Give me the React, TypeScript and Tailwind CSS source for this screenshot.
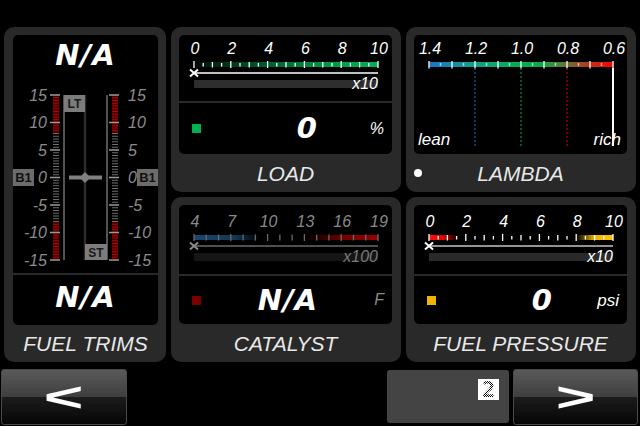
import React from 'react';

const FONT = "'Liberation Sans', Arial, sans-serif";
const X0 = 15;
const W = 184;

type Stop = [number, string, number];

type ScaleProps = {
  id: string;
  labels: string[];
  ticks: number;
  majorEvery: number;
  stops: Stop[];
  unit: string;
  dy?: number;
  dim?: boolean;
  lineColor?: string;
  track?: string;
};

function HScale({ id, labels, ticks, majorEvery, stops, unit, dy = 0, dim = false, lineColor, track }: ScaleProps) {
  const text = dim ? '#8a8a8a' : '#ffffff';
  const tick = dim ? '#6a6a6a' : '#ffffff';
  const line = lineColor ?? (dim ? '#6a6a6a' : '#ffffff');
  const mark = dim ? '#8a8a8a' : '#ffffff';
  const y = (v: number) => v + dy;

  const tickEls = [];
  for (let i = 0; i <= ticks; i++) {
    const x = X0 + (W * i) / ticks;
    let y1 = 28;
    let y2 = 31.5;
    if (i % majorEvery === 0) {
      y1 = 26;
      y2 = 33;
    } else if (majorEvery === 4 && i % 2 === 0) {
      y1 = 27;
      y2 = 32.5;
    } else if (majorEvery === 3) {
      y1 = 26.5;
      y2 = 32.5;
    }
    tickEls.push(
      <line key={i} x1={x} x2={x} y1={y(y1)} y2={y(y2)} stroke={tick} strokeWidth={1.3} />
    );
  }

  return (
    <svg width={213} height={66 + dy} className="block">
      <defs>
        <linearGradient id={id} x1="0" x2="1" y1="0" y2="0">
          {stops.map(([o, c, a], i) => (
            <stop key={i} offset={o} stopColor={c} stopOpacity={a} />
          ))}
        </linearGradient>
      </defs>
      {labels.map((l, i) => (
        <text
          key={l}
          x={X0 + 1 + (W * i) / (labels.length - 1)}
          y={y(18.5)}
          textAnchor="middle"
          fontFamily={FONT}
          fontStyle="italic"
          fontSize={16}
          fill={text}
        >
          {l}
        </text>
      ))}
      <rect x={X0} y={y(27)} width={W} height={5} fill={`url(#${id})`} />
      {tickEls}
      <line x1={X0} x2={X0 + W} y1={y(38)} y2={y(38)} stroke={line} strokeWidth={1.5} />
      <path
        d={`M${X0 - 4} ${y(34.5)} L${X0 + 4} ${y(41.5)} M${X0 + 4} ${y(34.5)} L${X0 - 4} ${y(41.5)}`}
        stroke={mark}
        strokeWidth={2}
      />
      <rect x={X0} y={y(45)} width={W} height={8} fill={track ?? (dim ? '#151515' : '#2e2e2e')} />
      <text
        x={X0 + W}
        y={y(53.5)}
        textAnchor="end"
        fontFamily={FONT}
        fontStyle="italic"
        fontSize={16}
        fill={dim ? '#7a7a7a' : '#ffffff'}
      >
        {unit}
      </text>
    </svg>
  );
}

function Readout({
  swatch,
  value,
  unit,
  unitClass,
  h,
}: {
  swatch: string;
  value: string;
  unit: string;
  unitClass: string;
  h: string;
}) {
  return (
    <div className={`flex items-center ${h}`}>
      <div className={`ml-[13px] h-[9px] w-[9px] ${swatch}`} />
      <div className="flex-1 text-right font-['DejaVu_Sans',sans-serif] text-[29px] font-bold italic leading-none tracking-[1px] text-white">
        {value}
      </div>
      <div className={`w-[74px] pr-[8px] text-right italic leading-none ${unitClass}`}>{unit}</div>
    </div>
  );
}

function Panel({
  title,
  children,
  className = '',
  lead,
}: {
  title: string;
  children: React.ReactNode;
  className?: string;
  lead?: React.ReactNode;
}) {
  return (
    <div className={`flex flex-col rounded-[10px] bg-[#292929] pt-[8px] pl-[8px] pr-[9px] ${className}`}>
      <div className="overflow-hidden rounded-[5px] bg-black">{children}</div>
      <div className="grid flex-1 grid-cols-[1fr_auto_1fr] items-center">
        <div className="flex items-center">{lead}</div>
        <div className="text-[21px] italic leading-none text-[#e8e8e8]">{title}</div>
        <div />
      </div>
    </div>
  );
}

function TrimGauge() {
  const yv = (v: number) => 20 + (15 - v) * 5.5;
  const nums = [15, 10, 5, 0, -5, -10, -15];
  const marks = [];
  for (let k = -30; k <= 30; k++) {
    const v = k / 2;
    for (const x of [40, 99]) {
      if (v % 5 === 0) {
        marks.push(<rect key={`${x}-${k}`} x={x - 3} y={yv(v) - 0.75} width={10} height={1.5} fill="#9a9a9a" />);
      } else {
        marks.push(
          <rect
            key={`${x}-${k}`}
            x={x}
            y={yv(v) - 0.5}
            width={6}
            height={1}
            fill={Math.abs(v) > 8 ? '#b80000' : '#6e6e6e'}
          />
        );
      }
    }
  }
  return (
    <svg width={145} height={198} className="block">
      {[40, 99].map((x) => (
        <g key={x}>
          <rect x={x} y={yv(15)} width={6} height={yv(8) - yv(15)} fill="#480000" />
          <rect x={x} y={yv(-8)} width={6} height={yv(-15) - yv(-8)} fill="#480000" />
        </g>
      ))}
      {marks}
      {nums.map((n) => (
        <g key={n}>
          <text x={34} y={yv(n) + 5.5} textAnchor="end" fontFamily={FONT} fontStyle="italic" fontSize={16} fill="#8c8c8c">
            {n}
          </text>
          <text x={115} y={yv(n) + 5.5} fontFamily={FONT} fontStyle="italic" fontSize={16} fill="#8c8c8c">
            {n}
          </text>
        </g>
      ))}
      <line x1={51} x2={51} y1={yv(15)} y2={yv(-15)} stroke="#8a8a8a" strokeWidth={1.2} />
      <line x1={94} x2={94} y1={yv(15)} y2={yv(-15)} stroke="#8a8a8a" strokeWidth={1.2} />
      <line x1={72} x2={72} y1={yv(15)} y2={yv(-15)} stroke="#2c2c2c" strokeWidth={2.5} />
      <rect x={51} y={20} width={21} height={17} fill="#7c7c7c" />
      <text x={61.5} y={33} textAnchor="middle" fontFamily={FONT} fontWeight="bold" fontSize={12} fill="#1a1a1a">
        LT
      </text>
      <rect x={72} y={169} width={22} height={16} fill="#7c7c7c" />
      <text x={83} y={181.5} textAnchor="middle" fontFamily={FONT} fontWeight="bold" fontSize={12} fill="#1a1a1a">
        ST
      </text>
      <rect x={56} y={yv(0) - 2} width={33} height={4} fill="#808080" />
      <path d={`M72 ${yv(0) - 5.5} L77.5 ${yv(0)} L72 ${yv(0) + 5.5} L66.5 ${yv(0)} Z`} fill="#808080" />
      <rect x={0} y={94} width={21} height={17} fill="#6c6c6c" />
      <text x={10.5} y={107} textAnchor="middle" fontFamily={FONT} fontWeight="bold" fontSize={13} fill="#111">
        B1
      </text>
      <rect x={124} y={94} width={21} height={17} fill="#6c6c6c" />
      <text x={134.5} y={107} textAnchor="middle" fontFamily={FONT} fontWeight="bold" fontSize={13} fill="#111">
        B1
      </text>
    </svg>
  );
}

function LambdaChart() {
  const step = W / 4;
  const labels = ['1.4', '1.2', '1.0', '0.8', '0.6'];
  const tickEls = [];
  for (let i = 0; i <= 16; i++) {
    const x = X0 + (W * i) / 16;
    if (i % 2 === 0) {
      tickEls.push(<line key={i} x1={x} x2={x} y1={26} y2={33.5} stroke="#ffffff" strokeWidth={1.3} />);
    } else {
      tickEls.push(<line key={i} x1={x} x2={x} y1={28} y2={31} stroke="#ffffff" strokeOpacity={0.6} strokeWidth={1.5} />);
    }
  }
  const dotted: [number, string][] = [
    [1, '#1a6fc0'],
    [2, '#00b050'],
    [3, '#e00000'],
  ];
  return (
    <svg width={213} height={119} className="block">
      <defs>
        <linearGradient id="g-lambda" x1="0" x2="1" y1="0" y2="0">
          <stop offset={0} stopColor="#1a74c8" />
          <stop offset={0.25} stopColor="#10a088" />
          <stop offset={0.5} stopColor="#00b050" />
          <stop offset={0.62} stopColor="#10a848" />
          <stop offset={0.75} stopColor="#6a7030" />
          <stop offset={0.88} stopColor="#c03018" />
          <stop offset={1} stopColor="#ff0000" />
        </linearGradient>
      </defs>
      {labels.map((l, i) => (
        <text
          key={l}
          x={X0 + 1 + step * i}
          y={18.5}
          textAnchor="middle"
          fontFamily={FONT}
          fontStyle="italic"
          fontSize={16}
          fill="#ffffff"
        >
          {l}
        </text>
      ))}
      <rect x={X0} y={27} width={W} height={5} fill="url(#g-lambda)" />
      {tickEls}
      {dotted.map(([i, c]) => (
        <line key={i} x1={X0 + step * i} x2={X0 + step * i} y1={33} y2={111} stroke={c} strokeWidth={1} strokeDasharray="2 2" />
      ))}
      <text x={4} y={110} fontFamily={FONT} fontStyle="italic" fontSize={17} fill="#ffffff">
        lean
      </text>
      <text x={207} y={110} textAnchor="end" fontFamily={FONT} fontStyle="italic" fontSize={17} fill="#ffffff">
        rich
      </text>
      <line x1={X0 + W} x2={X0 + W} y1={33} y2={111} stroke="#ffffff" strokeWidth={2} />
    </svg>
  );
}

function NavButton({ label, className }: { label: string; className: string }) {
  return (
    <div
      className={`flex h-[56px] items-center justify-center rounded-[3px] border border-[#4a4a4a] bg-[linear-gradient(to_bottom,#5a5a5a_0%,#3e3e3e_50%,#1c1c1c_50%,#060606_100%)] ${className}`}
    >
      <span className="inline-block scale-x-[1.7] text-[40px] font-bold leading-none text-white">{label}</span>
    </div>
  );
}

export default function App() {
  return (
    <div className="flex h-[426px] w-[640px] flex-col overflow-hidden bg-black font-['Liberation_Sans',Arial,sans-serif]">
      <div className="mt-[27px] ml-[4px] grid grid-cols-[162px_230px_230px] grid-rows-[165px_165px] gap-[5px]">
        <div className="row-span-2 flex flex-col rounded-[10px] bg-[#292929] pt-[8px] pl-[9px] pr-[8px]">
          <div className="flex h-[290px] flex-col overflow-hidden rounded-[5px] bg-black">
            <div className="flex h-[40px] items-center justify-center font-['DejaVu_Sans',sans-serif] text-[29px] font-bold italic leading-none tracking-[1px] text-white">
              N/A
            </div>
            <TrimGauge />
            <div className="h-[2px] bg-[#2a2a2a]" />
            <div className="flex h-[50px] items-center justify-center pb-[6px] font-['DejaVu_Sans',sans-serif] text-[29px] font-bold italic leading-none tracking-[1px] text-white">
              N/A
            </div>
          </div>
          <div className="flex flex-1 items-center justify-center text-[21px] italic leading-none text-[#e8e8e8]">
            FUEL TRIMS
          </div>
        </div>

        <Panel title="LOAD">
          <HScale
            id="g-load"
            labels={['0', '2', '4', '6', '8', '10']}
            ticks={20}
            majorEvery={4}
            stops={[
              [0, '#00b050', 0],
              [0.05, '#00b050', 0.15],
              [0.7, '#00b050', 0.85],
              [1, '#00b050', 1],
            ]}
            unit="x10"
          />
          <div className="h-[2px] bg-[#2a2a2a]" />
          <Readout swatch="bg-[#00b050]" value="0" unit="%" unitClass="text-[16px] text-white" h="h-[51px]" />
        </Panel>

        <Panel
          title="LAMBDA"
          lead={<div className="h-[8px] w-[8px] rounded-full bg-white" />}
        >
          <LambdaChart />
        </Panel>

        <Panel title="CATALYST">
          <HScale
            id="g-cat"
            labels={['4', '7', '10', '13', '16', '19']}
            ticks={15}
            majorEvery={3}
            dy={3}
            dim
            stops={[
              [0, '#1b4f7a', 0.9],
              [0.22, '#1b4f7a', 0.7],
              [0.36, '#1b4f7a', 0],
              [0.6, '#7a0000', 0],
              [0.8, '#8a0000', 0.8],
              [1, '#9a0000', 1],
            ]}
            unit="x100"
          />
          <div className="h-[2px] bg-[#2a2a2a]" />
          <Readout swatch="bg-[#7a0000]" value="N/A" unit="F" unitClass="text-[16px] text-[#8a8a8a]" h="h-[48px]" />
        </Panel>

        <Panel title="FUEL PRESSURE">
          <HScale
            id="g-fp"
            labels={['0', '2', '4', '6', '8', '10']}
            ticks={20}
            majorEvery={4}
            dy={3}
            lineColor="#c4c4c4"
            track="#2a2a2a"
            stops={[
              [0, '#ff1010', 1],
              [0.08, '#e00000', 1],
              [0.17, '#700000', 0],
              [0.8, '#f0b400', 0],
              [0.9, '#f0b400', 1],
              [1, '#ffc400', 1],
            ]}
            unit="x10"
          />
          <div className="h-[2px] bg-[#2a2a2a]" />
          <Readout swatch="bg-[#f0b400]" value="0" unit="psi" unitClass="text-[17px] text-white" h="h-[48px]" />
        </Panel>
      </div>

      <div className="mt-[7px] flex flex-1 items-start">
        <NavButton label="<" className="ml-[1px] w-[126px]" />
        <div className="ml-auto mt-[1px] flex h-[53px] w-[122px] items-start justify-end rounded-[3px] bg-[#444444] pt-[9px] pr-[10px]">
          <div className="flex h-[21px] w-[21px] items-center justify-center bg-white">
            <span className="bg-[image:repeating-conic-gradient(#000_0%_25%,#ffffff_0%_50%)] bg-[length:2px_2px] bg-clip-text font-['DejaVu_Sans_Mono',monospace] text-[22px] font-bold leading-none text-transparent">
              2
            </span>
          </div>
        </div>
        <NavButton label=">" className="ml-[4px] mr-[2px] w-[125px]" />
      </div>
    </div>
  );
}
